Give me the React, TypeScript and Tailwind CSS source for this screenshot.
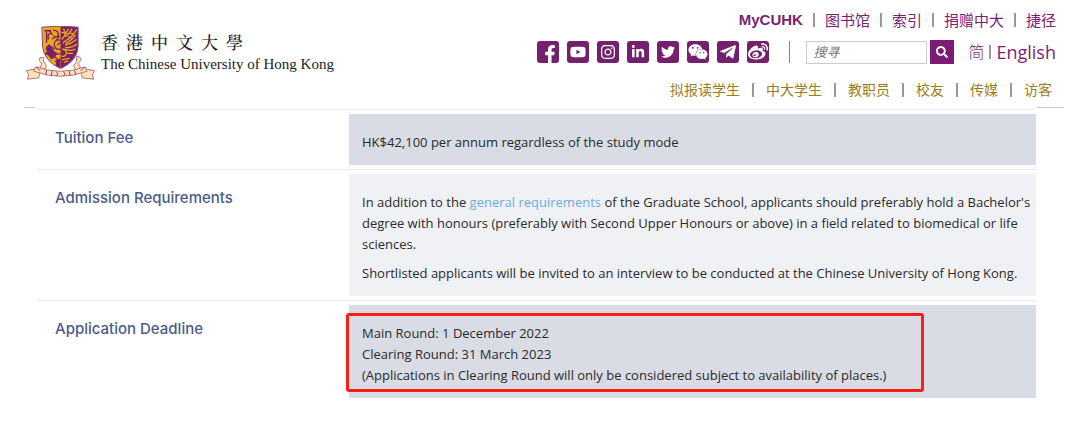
import {
  FaFacebookF,
  FaInstagram,
  FaLinkedinIn,
  FaSearch,
  FaTelegramPlane,
  FaTwitter,
  FaWeibo,
  FaWeixin,
  FaYoutube,
} from "react-icons/fa";

const socials = [
  { icon: FaFacebookF, label: "Facebook", look: "h-[18px] w-[18px] mt-1 ml-1" },
  { icon: FaYoutube, label: "YouTube", look: "h-4 w-4" },
  { icon: FaInstagram, label: "Instagram", look: "h-4 w-4" },
  { icon: FaLinkedinIn, label: "LinkedIn", look: "h-3.5 w-3.5" },
  { icon: FaTwitter, label: "Twitter", look: "h-3.5 w-3.5" },
  { icon: FaWeixin, label: "WeChat", look: "h-5 w-5" },
  { icon: FaTelegramPlane, label: "Telegram", look: "h-[18px] w-[18px]" },
  { icon: FaWeibo, label: "Weibo", look: "h-5 w-5" },
];

const quickLinks = ["图书馆", "索引", "捐赠中大", "捷径"];

const audiences = ["拟报读学生", "中大学生", "教职员", "校友", "传媒", "访客"];

function Crest() {
  return (
    <svg
      viewBox="30 34 208 162"
      className="h-[54px] w-[69px] shrink-0"
      aria-hidden="true"
      strokeLinecap="round"
      strokeLinejoin="round"
    >
      {/* ribbon */}
      <g fill="#fae3b4" stroke="#b5718a" strokeWidth="3">
        <path d="M82 128l-10 1-2 9 8 10-6 10 12 10 8-14-8-12z" />
        <path d="M184 125l9 3 3 9-9 10 7 11-12 10-9-14 9-12z" />
        <path d="M32 168l35-6 6 10-5 18-34 4 4-13z" />
        <path d="M236 168l-35-6-6 10 5 18 34 4-4-13z" />
        <path d="M60 157q36 13 74 13t74-13l6 13q-38 15-80 15t-80-15z" />
      </g>
      <path
        d="M92 168l-2 12M109 170l-3 12M122 172l4 6-4 5M144 172l4 6-4 5M160 170l3 12M177 168l2 12M62 158l10 10M206 158l-10 10"
        fill="none"
        stroke="#963a70"
        strokeWidth="3"
      />
      {/* shield */}
      <path
        d="M79 37q54-6 108 0v59q-3 43-53 66-50-23-54-66z"
        fill="#eda80c"
      />
      <path d="M134 35q27-1 53 2v59q-3 43-53 66z" fill="#782070" />
      {/* phoenix, gold wing on the purple half */}
      <g fill="none" stroke="#eda80c" strokeWidth="4">
        <path d="M182 45q-14 22-30 31-8 4-12 12M178 61q-9 16-28 24M181 75q-14 12-32 16M182 89q-14 10-32 10M177 104q-12 6-27 0" />
        <path d="M168 43q-8 14-18 22M157 43l-8 16M144 42l4 18-9 13M138 53l12 2M163 55l8 2M158 66l9 4" />
        <path d="M139 103q16 1 12 16-5 9-13 5M140 135l20-4M145 143l11-4M156 116l15 0" />
      </g>
      {/* phoenix, purple head and body on the gold half */}
      <g fill="none" stroke="#782070" strokeWidth="4">
        <path d="M87 48h17v7l-7 5v13M92 52v30M101 49l8 10M113 46q17 2 13 17-5 8-12 1M124 49l5 17-7 10M109 72l13-6" />
        <path d="M134 76q-18-3-19 14 3 16 17 14 16-6 8-17-10-7-14 4" />
        <path d="M91 104q13-16 24-1M96 102l4 22M104 113l13 7 14-3M105 132l12-5 9 8" />
      </g>
      <path
        d="M90 97l10-9 8 9 6 12 10 6-6 12-13 3-8-8-11-4 7-8zM116 139l17-8v30q-8-4-14-9l2-8z"
        fill="#782070"
      />
      <path
        d="M79 37q54-6 108 0v59q-3 43-53 66-50-23-54-66z"
        fill="none"
        stroke="#8b427c"
        strokeWidth="3"
      />
    </svg>
  );
}

function Divider() {
  return <span className="h-3.5 w-0.5 bg-[#999]" aria-hidden="true" />;
}

function Row({
  title,
  shade,
  children,
}: {
  title: string;
  shade: string;
  children: React.ReactNode;
}) {
  return (
    <tr className="border-t border-[#ebebed]">
      <th
        scope="row"
        className="w-[312px] pl-[18px] pt-4 text-left align-top font-['Inter',sans-serif] text-[15px] leading-6 font-medium text-[#4b5c87]"
      >
        {title}
      </th>
      <td className="py-1 align-top">
        <div
          className={`relative pt-[18px] pb-3 pl-[13px] [&>p+p]:mt-2 ${shade}`}
        >
          {children}
        </div>
      </td>
    </tr>
  );
}

export default function App() {
  return (
    <div className="bg-white font-['Open_Sans','Noto_Sans_CJK_SC',sans-serif] text-[#2a2a2c]">
      {/* Header */}
      <header className="ml-6 mr-4 flex justify-between border-b border-[#ccc] pb-[5px]">
        <a href="#" className="flex items-start pt-[26px] pl-0.5 text-[#222]">
          <Crest />
          <span className="ml-1.5 pt-1">
            <span className="flex gap-2 font-['Noto_Serif_CJK_TC','Noto_Sans_CJK_TC',serif] text-[17px] leading-6 font-medium">
              {[..."香港中文大學"].map((c) => (
                <span key={c}>{c}</span>
              ))}
            </span>
            <span className="block font-['Liberation_Serif',serif] text-[15px] leading-5">
              The Chinese University of Hong Kong
            </span>
          </span>
        </a>

        <div className="flex flex-col items-end pt-2.5 pr-2">
          <nav className="flex items-center gap-2.5 text-[15px] leading-5 text-[#7a1f74]">
            <a
              href="#"
              className="font-['Liberation_Sans',sans-serif] font-bold"
            >
              MyCUHK
            </a>
            {quickLinks.map((q) => (
              <span key={q} className="flex items-center gap-2.5">
                <Divider />
                <a href="#">{q}</a>
              </span>
            ))}
          </nav>

          <div className="mt-2.5 flex items-center">
            <div className="flex gap-2">
              {socials.map((s) => (
                <a
                  key={s.label}
                  href="#"
                  aria-label={s.label}
                  className="flex h-[22px] w-[22px] items-center justify-center overflow-hidden rounded-[3px] bg-[#74206c] text-white"
                >
                  <s.icon className={s.look} />
                </a>
              ))}
            </div>
            <span className="ml-5 h-[22px] w-px bg-[#a868a3]" />
            <form className="ml-4 flex items-center gap-[3px]">
              <input
                type="text"
                aria-label="搜寻"
                placeholder="搜寻"
                className="h-[23px] w-[121px] border border-[#ccc] px-1.5 text-[13px] italic placeholder:text-[#777]"
              />
              <button
                type="submit"
                aria-label="Search"
                className="flex h-6 w-6 items-center justify-center bg-[#7c1b76] text-white"
              >
                <FaSearch className="h-3 w-3" />
              </button>
            </form>
            <div className="ml-3.5 flex items-center gap-[5px] leading-6 text-[#7a1f74]">
              <a href="#" className="text-base leading-6 font-light">
                简
              </a>
              <Divider />
              <a href="#" className="text-lg leading-6">
                English
              </a>
            </div>
          </div>

          <nav className="mt-3.5 mr-1 flex items-center gap-3 text-sm leading-6 text-[#9a7d1c]">
            {audiences.map((a, i) => (
              <span key={a} className="flex items-center gap-3">
                {i > 0 && <Divider />}
                <a href="#">{a}</a>
              </span>
            ))}
          </nav>
        </div>
      </header>

      {/* Programme details */}
      <main className="relative -mt-px ml-[35px] mr-11 bg-white pt-0.5 pl-0.5">
        <table className="w-full table-fixed border-collapse text-[13px] leading-[21px]">
          <tbody>
            <Row title="Tuition Fee" shade="bg-[#d9dce5]">
              <p>HK$42,100 per annum regardless of the study mode</p>
            </Row>
            <Row title="Admission Requirements" shade="bg-[#f0f1f5]">
              <p>
                In addition to the{" "}
                <a href="#" className="text-[#6fabe0]">
                  general requirements
                </a>{" "}
                of the Graduate School, applicants should preferably hold a
                Bachelor's degree with honours (preferably with Second Upper
                Honours or above) in a field related to biomedical or life
                sciences.
              </p>
              <p>
                Shortlisted applicants will be invited to an interview to be
                conducted at the Chinese University of Hong Kong.
              </p>
            </Row>
            <Row title="Application Deadline" shade="bg-[#d9dce5]">
              <p>
                Main Round: 1 December 2022
                <br />
                Clearing Round: 31 March 2023
                <br />
                (Applications in Clearing Round will only be considered subject
                to availability of places.)
              </p>
              {/* marker around the dates */}
              <div className="pointer-events-none absolute top-2 right-28 bottom-1.5 -left-[3px] rounded-[3px] border-3 border-[#fb1e14]" />
            </Row>
          </tbody>
        </table>
      </main>
    </div>
  );
}
